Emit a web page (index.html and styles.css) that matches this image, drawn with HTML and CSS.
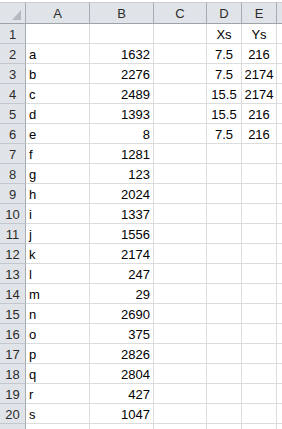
FILE: index.html
```html
<!DOCTYPE html>
<html lang="en">
<head>
    <meta charset="UTF-8">
    <meta name="viewport" content="width=device-width, initial-scale=1.0">
    <title>Sheet1</title>
    <link rel="stylesheet" href="styles.css">
</head>
<body>
    <div class="sheet">
        <!-- column headers -->
        <div class="corner">
            <svg class="corner-mark" width="9" height="10" viewBox="0 0 9 10"><path d="M9 0V10H0z" fill="#b4bac1"/></svg>
        </div>
        <div class="colhead">A</div>
        <div class="colhead">B</div>
        <div class="colhead">C</div>
        <div class="colhead">D</div>
        <div class="colhead">E</div>
        <div class="colhead last"></div>

        <div class="rowhead">1</div><div class="cell"></div><div class="cell"></div><div class="cell"></div><div class="cell mid">Xs</div><div class="cell mid">Ys</div><div class="cell"></div>
        <div class="rowhead">2</div><div class="cell">a</div><div class="cell num">1632</div><div class="cell"></div><div class="cell mid">7.5</div><div class="cell mid">216</div><div class="cell"></div>
        <div class="rowhead">3</div><div class="cell">b</div><div class="cell num">2276</div><div class="cell"></div><div class="cell mid">7.5</div><div class="cell mid">2174</div><div class="cell"></div>
        <div class="rowhead">4</div><div class="cell">c</div><div class="cell num">2489</div><div class="cell"></div><div class="cell mid">15.5</div><div class="cell mid">2174</div><div class="cell"></div>
        <div class="rowhead">5</div><div class="cell">d</div><div class="cell num">1393</div><div class="cell"></div><div class="cell mid">15.5</div><div class="cell mid">216</div><div class="cell"></div>
        <div class="rowhead">6</div><div class="cell">e</div><div class="cell num">8</div><div class="cell"></div><div class="cell mid">7.5</div><div class="cell mid">216</div><div class="cell"></div>
        <div class="rowhead">7</div><div class="cell">f</div><div class="cell num">1281</div><div class="cell"></div><div class="cell"></div><div class="cell"></div><div class="cell"></div>
        <div class="rowhead">8</div><div class="cell">g</div><div class="cell num">123</div><div class="cell"></div><div class="cell"></div><div class="cell"></div><div class="cell"></div>
        <div class="rowhead">9</div><div class="cell">h</div><div class="cell num">2024</div><div class="cell"></div><div class="cell"></div><div class="cell"></div><div class="cell"></div>
        <div class="rowhead">10</div><div class="cell">i</div><div class="cell num">1337</div><div class="cell"></div><div class="cell"></div><div class="cell"></div><div class="cell"></div>
        <div class="rowhead">11</div><div class="cell">j</div><div class="cell num">1556</div><div class="cell"></div><div class="cell"></div><div class="cell"></div><div class="cell"></div>
        <div class="rowhead">12</div><div class="cell">k</div><div class="cell num">2174</div><div class="cell"></div><div class="cell"></div><div class="cell"></div><div class="cell"></div>
        <div class="rowhead">13</div><div class="cell">l</div><div class="cell num">247</div><div class="cell"></div><div class="cell"></div><div class="cell"></div><div class="cell"></div>
        <div class="rowhead">14</div><div class="cell">m</div><div class="cell num">29</div><div class="cell"></div><div class="cell"></div><div class="cell"></div><div class="cell"></div>
        <div class="rowhead">15</div><div class="cell">n</div><div class="cell num">2690</div><div class="cell"></div><div class="cell"></div><div class="cell"></div><div class="cell"></div>
        <div class="rowhead">16</div><div class="cell">o</div><div class="cell num">375</div><div class="cell"></div><div class="cell"></div><div class="cell"></div><div class="cell"></div>
        <div class="rowhead">17</div><div class="cell">p</div><div class="cell num">2826</div><div class="cell"></div><div class="cell"></div><div class="cell"></div><div class="cell"></div>
        <div class="rowhead">18</div><div class="cell">q</div><div class="cell num">2804</div><div class="cell"></div><div class="cell"></div><div class="cell"></div><div class="cell"></div>
        <div class="rowhead">19</div><div class="cell">r</div><div class="cell num">427</div><div class="cell"></div><div class="cell"></div><div class="cell"></div><div class="cell"></div>
        <div class="rowhead">20</div><div class="cell">s</div><div class="cell num">1047</div><div class="cell"></div><div class="cell"></div><div class="cell"></div><div class="cell"></div>
        <div class="rowhead"></div><div class="cell"></div><div class="cell"></div><div class="cell"></div><div class="cell"></div><div class="cell"></div><div class="cell"></div>
    </div>
</body>
</html>
```
FILE: styles.css
```css
html,
body {
    margin: 0;
    padding: 0;
    background-color: #fff;
    overflow: hidden;
}
body {
    padding-top: 2px;
    font-family: "Liberation Sans", Arial, sans-serif;
    font-size: 13px;
    color: #000;
}
.sheet {
    display: grid;
    grid-template-columns: 26px 64px 64px 53px 35px 35px 1fr;
    grid-template-rows: 22px;
    grid-auto-rows: 20px;
}
.corner,
.colhead {
    box-sizing: border-box;
    background-color: #e0e4e9;
    border-top: 1px solid #c9cdd2;
    border-bottom: 1px solid #9ea3a9;
    border-right: 1px solid #a7acb2;
    color: #2b2b2b;
    display: flex;
    align-items: flex-end;
    justify-content: center;
    line-height: 15px;
    padding-bottom: 2px;
}
.corner {
    justify-content: flex-end;
    padding: 0 4px 3px 0;
}
.corner-mark {
    display: block;
}
.colhead.last {
    border-right: none;
}
.rowhead {
    box-sizing: border-box;
    background-color: #e0e4e9;
    border-right: 1px solid #a7acb2;
    border-bottom: 1px solid #c3c8ce;
    color: #2b2b2b;
    display: flex;
    align-items: flex-end;
    justify-content: center;
    line-height: 15px;
    padding-bottom: 1px;
}
.cell {
    box-sizing: border-box;
    border-right: 1px solid #dadcdd;
    border-bottom: 1px solid #dadcdd;
    display: flex;
    align-items: flex-end;
    line-height: 15px;
    padding: 0 3px 1px 3px;
    white-space: nowrap;
    overflow: hidden;
}
.cell.num {
    justify-content: flex-end;
}
.cell.mid {
    justify-content: center;
    padding: 0 0 1px 0;
}
```
